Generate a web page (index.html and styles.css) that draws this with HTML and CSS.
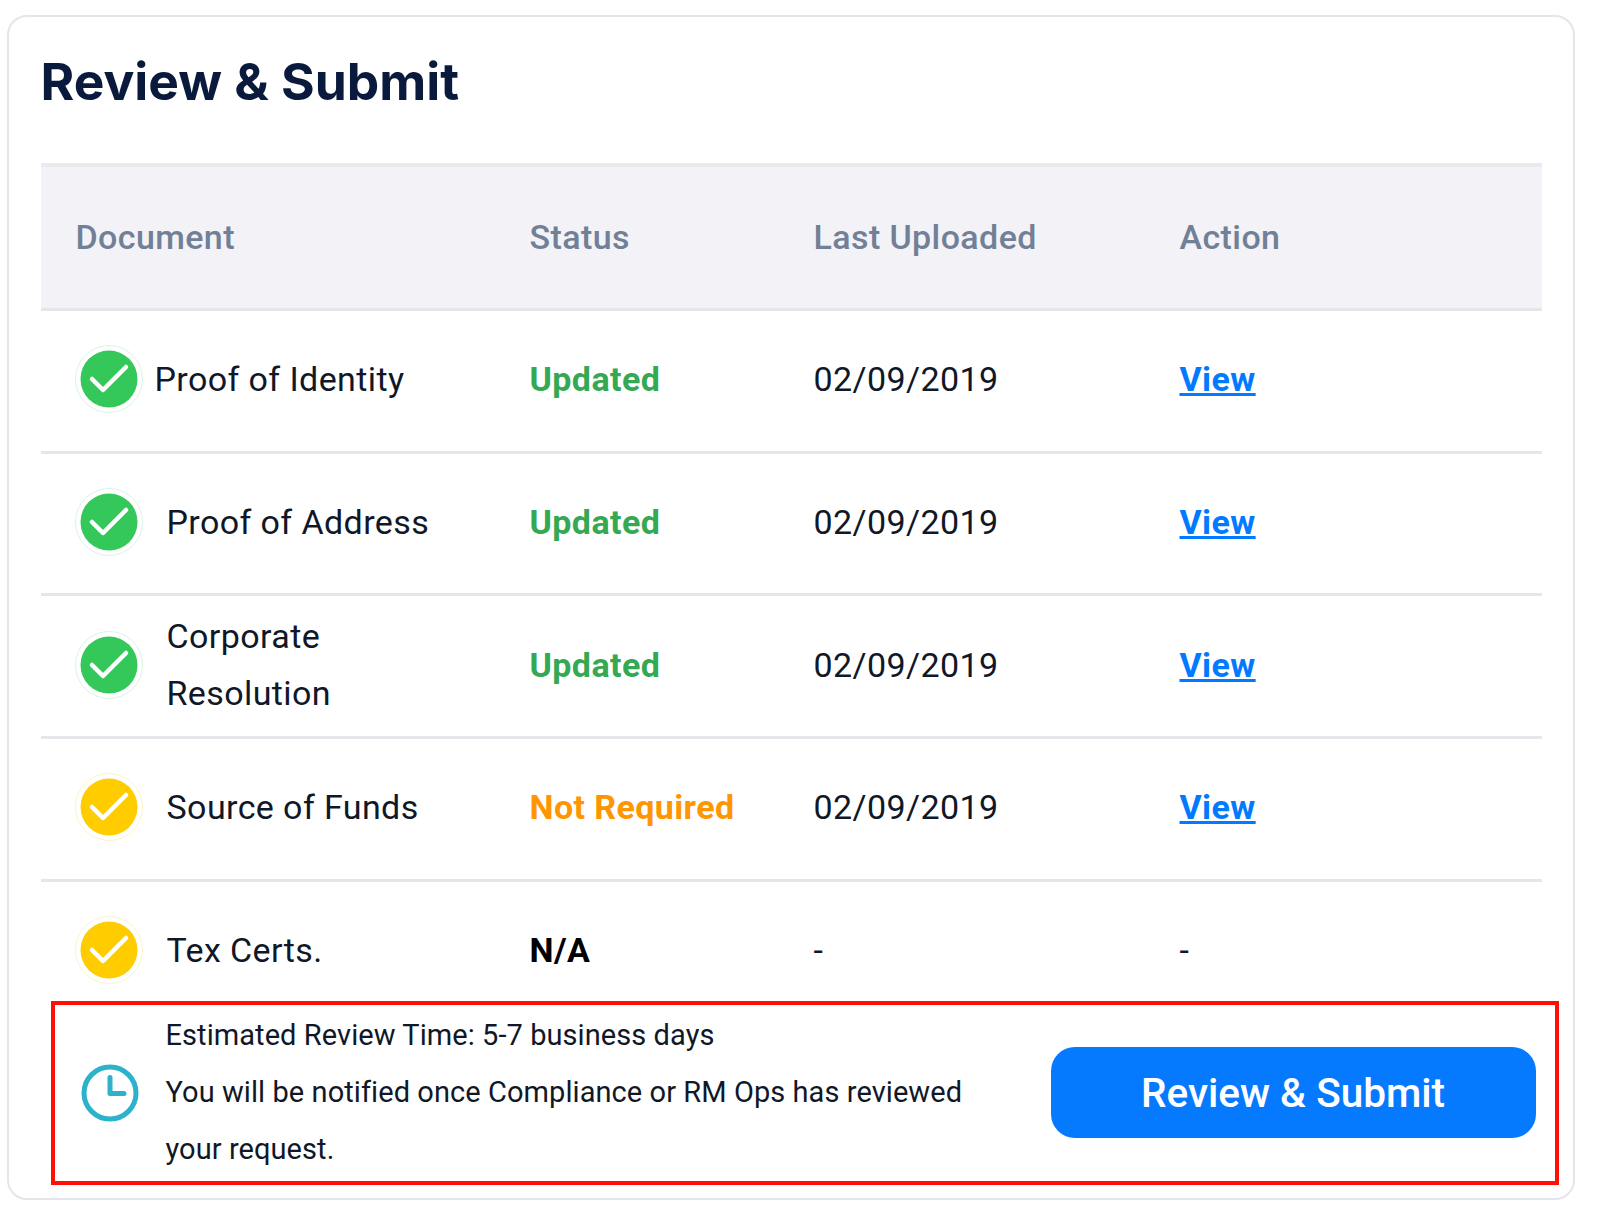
FILE: index.html
```html
<!DOCTYPE html>
<html lang="en">
<head>
<meta charset="utf-8">
<title>Review &amp; Submit</title>
<link rel="stylesheet" href="styles.css">
</head>
<body>
<main class="card">
  <h1 class="title">Review &amp; Submit</h1>
  <section class="table">
    <div class="row head">
      <div>Document</div><div>Status</div><div>Last Uploaded</div><div>Action</div>
    </div>
    <div class="row">
      <div class="doc tight"><svg class="icon green"><use href="#check"/></svg><span>Proof of Identity</span></div>
      <div class="st updated">Updated</div><div>02/09/2019</div><div><a class="view" href="#">View</a></div>
    </div>
    <div class="row mid">
      <div class="doc"><svg class="icon green"><use href="#check"/></svg><span>Proof of Address</span></div>
      <div class="st updated">Updated</div><div>02/09/2019</div><div><a class="view" href="#">View</a></div>
    </div>
    <div class="row mid">
      <div class="doc"><svg class="icon green"><use href="#check"/></svg><span>Corporate<br>Resolution</span></div>
      <div class="st updated">Updated</div><div>02/09/2019</div><div><a class="view" href="#">View</a></div>
    </div>
    <div class="row">
      <div class="doc"><svg class="icon yellow"><use href="#check"/></svg><span>Source of Funds</span></div>
      <div class="st notreq">Not Required</div><div>02/09/2019</div><div><a class="view" href="#">View</a></div>
    </div>
    <div class="row last">
      <div class="doc"><svg class="icon yellow"><use href="#check"/></svg><span>Tex Certs.</span></div>
      <div class="st na">N/A</div><div>-</div><div>-</div>
    </div>
  </section>
  <section class="notice">
    <svg class="clock" viewBox="0 0 60 60"><circle cx="30" cy="30" r="26" fill="none" stroke="currentColor" stroke-width="5"/><path d="M30 14.500V30.500H44" fill="none" stroke="currentColor" stroke-width="5" stroke-linecap="round" stroke-linejoin="round"/></svg>
    <p class="notice-text">Estimated Review Time: 5-7 business days<br>You will be notified once Compliance or RM Ops has reviewed<br>your request.</p>
    <button class="submit" type="button">Review &amp; Submit</button>
  </section>
</main>
<svg class="defs" width="0" height="0">
  <symbol id="check" viewBox="0 0 68 68">
    <circle cx="34" cy="34" r="33.500" fill="#fff" stroke="var(--ring)"/>
    <circle cx="34" cy="34" r="28.500" fill="var(--fill)"/>
    <path d="M17 34L28 45L51 22" fill="none" stroke="#fff" stroke-width="4.500" stroke-linecap="round" stroke-linejoin="round"/>
  </symbol>
</svg>
</body>
</html>
```
FILE: styles.css
```css
* { box-sizing: border-box; }
html, body { margin: 0; background: #fff; }
body { padding: 15px 25px 0 7px; font-family: Roboto, "Liberation Sans", sans-serif; color: #101828; }
.card { width: 1568px; height: 1185px; border: 2.500px solid #e5e5eb; border-radius: 20px; padding: 0 30.500px 0 31.500px; }
.title { margin: 0; height: 145.500px; padding-top: 31px; font: 700 51.500px/66px Inter, "Liberation Sans", sans-serif; color: #0a1a3c; }
.table { width: 1501px; }
.row { display: grid; grid-template-columns: 454px 284px 366px 1fr; align-items: center; height: 143px; padding: 0 0 3px 35px; border-bottom: 3px solid #e5e5ea; font-size: 34px; letter-spacing: 0.4px; }
.mid { height: 142.500px; padding-bottom: 2px; }
.head { height: 148px; padding-bottom: 0; background: #f2f2f7; border-top: 4px solid #e9e9ee; color: #718096; font-weight: 500; }
.last { height: 119px; padding: 18px 0 0 35px; border-bottom: 0; }
.doc { display: flex; align-items: center; gap: 24px; line-height: 57px; margin-left: -1px; }
.tight { gap: 12px; }
.icon { flex: none; width: 68px; height: 68px; }
.green { --fill: #34c759; --ring: #d8f5e0; }
.yellow { --fill: #ffcc00; --ring: #fff3c6; }
.st { font-weight: 700; }
.updated { color: #34a853; }
.notreq { color: #ff9500; }
.na { color: #000; }
.view { color: #007aff; font-weight: 700; text-decoration: underline; }
.notice { display: flex; align-items: center; width: 1508px; height: 184px; margin-left: 10px; border: 4px solid #ff0f05; padding: 0 19px 0 25px; }
.clock { flex: none; width: 60px; height: 60px; color: #2cb2cb; }
.notice-text { flex: 1; margin: 0 0 0 26px; font-size: 29px; line-height: 57px; letter-spacing: 0.07px; }
.submit { flex: none; width: 485px; height: 91px; padding: 0; border: 0; border-radius: 24px; background: #057aff; color: #fff; font: 500 40.500px Roboto, "Liberation Sans", sans-serif; }
.defs { position: absolute; }
```
